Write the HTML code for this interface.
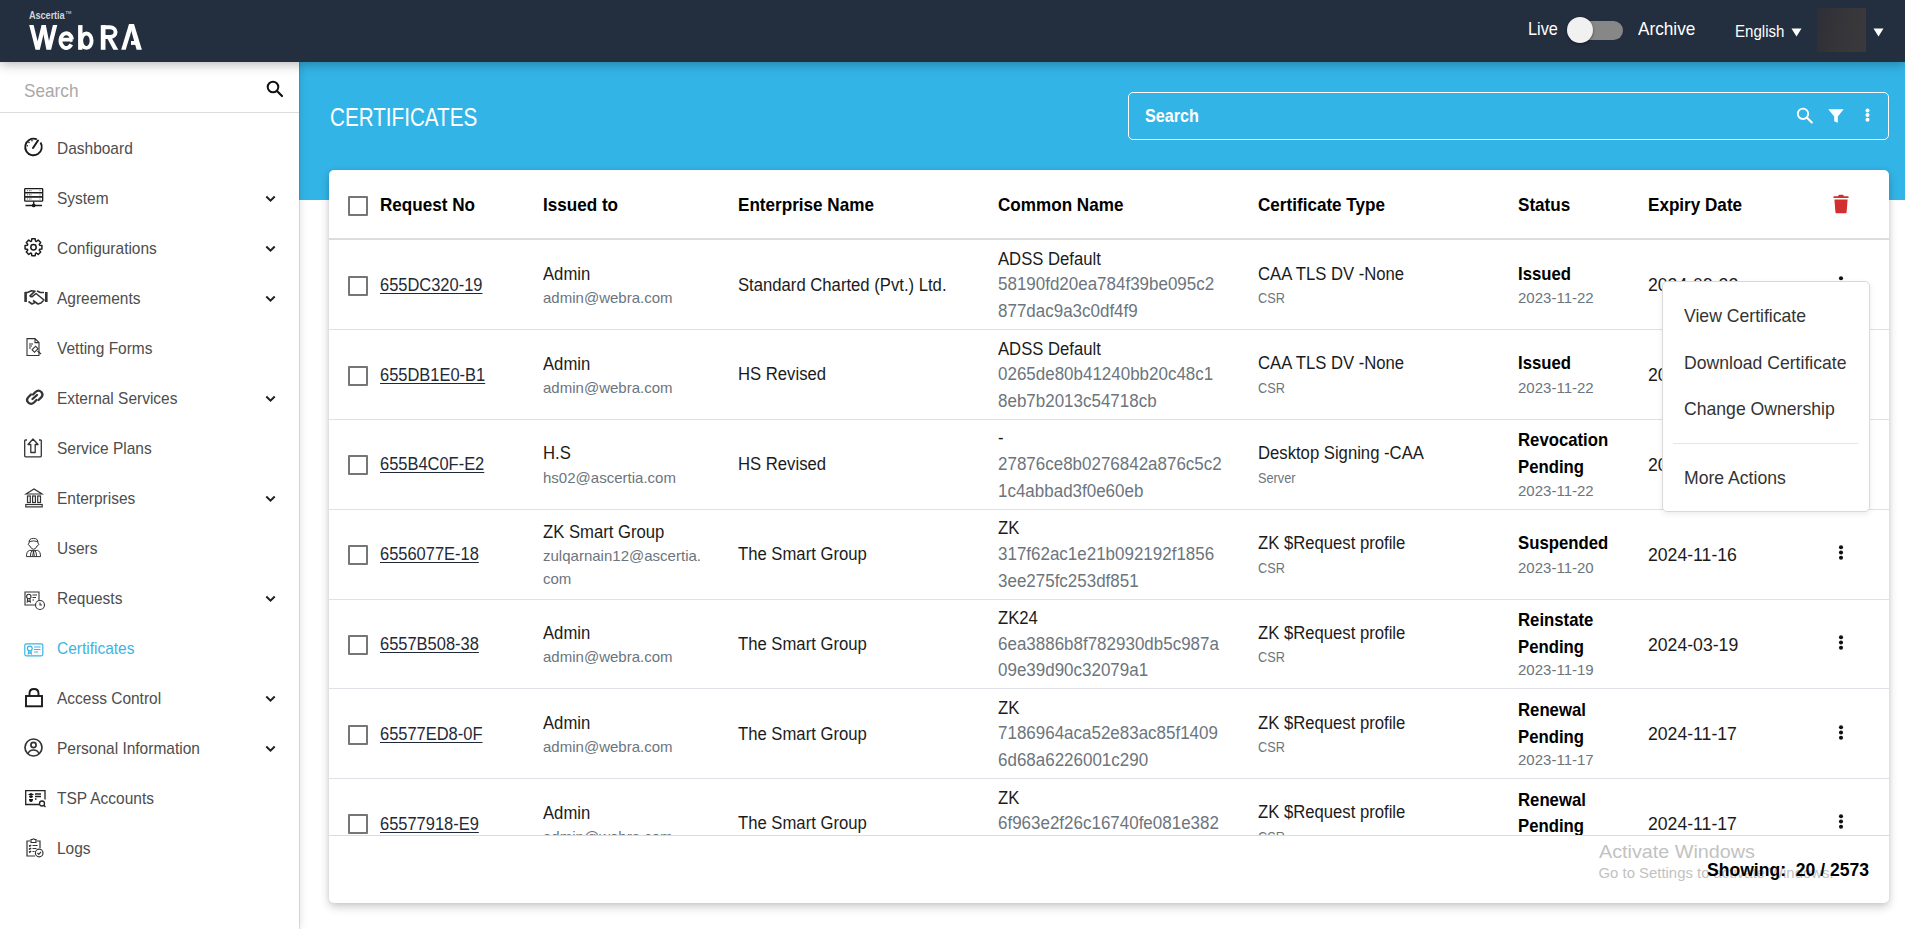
<!DOCTYPE html>
<html><head><meta charset="utf-8">
<style>
*{box-sizing:border-box;margin:0;padding:0}
html,body{width:1905px;height:929px;overflow:hidden;background:#fff;font-family:"Liberation Sans",sans-serif;color:#212529}
.abs{position:absolute}
.t{position:absolute;white-space:nowrap;line-height:1;transform-origin:0 0}
#hdr{position:absolute;left:0;top:0;width:1905px;height:62px;background:#232e3e;z-index:5;box-shadow:0 2px 11px rgba(0,0,0,.3)}
#side{position:absolute;left:0;top:62px;width:299px;height:867px;background:#fff;z-index:3;box-shadow:1px 0 0 rgba(0,0,0,.1),1px 0 8px rgba(0,0,0,.13)}
#banner{position:absolute;left:299px;top:62px;width:1606px;height:138px;background:#33b4e6}
#card{position:absolute;left:329px;top:170px;width:1560px;height:733px;background:#fff;border-radius:5px;box-shadow:0 4px 10px rgba(0,0,0,.2),0 0 4px rgba(0,0,0,.08);z-index:1}
svg{position:absolute;overflow:visible}
</style></head><body>
<div id="hdr">
<div class="t" style="left:29px;top:11.00px;font-size:10px;color:#d2d5d9;font-weight:bold;transform:scaleX(0.92);letter-spacing:-0.1px">Ascertia</div>
<div class="t" style="left:65.6px;top:10.6px;font-size:4px;color:#b8bcc2;font-weight:bold">TM</div>
<svg style="left:0;top:0" width="160" height="62" viewBox="0 0 160 62"><g fill="#fff"><polygon points="29.2,25.1 33.6,25.1 37.6,41.3 41.6,25.1 45.8,25.1 39.8,49.8 35.5,49.8"/><polygon points="41.6,25.1 45.8,25.1 49,41 52.9,25.1 57.3,25.1 51.1,49.8 46.4,49.8"/><polygon points="129,24.1 133.6,24.1 125.7,49.8 121.2,49.8"/><polygon points="129.4,24.1 134,24.1 141.9,49.8 136.6,49.8"/><rect x="131" y="41" width="7" height="3.9"/><rect x="78.1" y="25.1" width="4.4" height="24.7"/><rect x="100.8" y="25.1" width="4.7" height="24.7"/></g><g fill="none" stroke="#fff" stroke-width="3.9"><path d="M60.5 39.6 H72 L71.94 39.63 L71.78 38.62 L71.50 37.65 L71.12 36.74 L70.64 35.91 L70.08 35.17 L69.44 34.54 L68.74 34.02 L67.99 33.64 L67.20 33.40 L66.40 33.30 L65.59 33.35 L64.80 33.54 L64.04 33.87 L63.31 34.33 L62.65 34.92 L62.06 35.62 L61.55 36.42 L61.13 37.30 L60.81 38.25 L60.61 39.25 L60.51 40.27 L60.52 41.30 L60.65 42.32 L60.89 43.31 L61.23 44.24 L61.68 45.10 L62.21 45.88 L62.82 46.55 L63.50 47.11 L64.24 47.53 L65.01 47.83 L65.81 47.98 L66.62 47.99 L67.42 47.85 L68.19 47.57 L68.93 47.15 L69.62 46.61 L70.24 45.95 L70.78 45.18 L71.23 44.33"/><ellipse cx="86.4" cy="40.7" rx="5.2" ry="7.2"/><path d="M103 27.25 H110 A5.6 4.85 0 0 1 110 36.95 H103"/></g><polygon points="106.5,37 111.2,37 118.3,49.8 113.4,49.8" fill="#fff"/></svg>
<div class="t" style="left:1527.5px;top:19.97px;font-size:18.5px;color:#fff;transform:scaleX(0.88);">Live</div>
<div class="abs" style="left:1568px;top:21px;width:55px;height:19px;border-radius:10px;background:#878787"></div>
<div class="abs" style="left:1567px;top:17px;width:26px;height:26px;border-radius:50%;background:#f1f1f1;box-shadow:0 1px 3px rgba(0,0,0,.45)"></div>
<div class="t" style="left:1638px;top:19.89px;font-size:18.6px;color:#fff;transform:scaleX(0.925);">Archive</div>
<div class="t" style="left:1734.5px;top:22.86px;font-size:16.4px;color:#fff;transform:scaleX(0.92);">English</div>
<svg style="left:1791px;top:28px" width="11" height="9"><path d="M0.5 0.5 L10.5 0.5 L5.5 8.5 Z" fill="#fff"/></svg>
<div class="abs" style="left:1817px;top:8px;width:49px;height:44px;background:linear-gradient(100deg,#2e3038 0%,#363539 50%,#3b393b 100%)"></div>
<svg style="left:1873px;top:28px" width="11" height="9"><path d="M0.5 0.5 L10.5 0.5 L5.5 8.5 Z" fill="#fff"/></svg>
</div>
<div id="side">
</div>
<div style="position:absolute;left:0;top:0;z-index:4">
<div class="t" style="left:24px;top:81.89px;font-size:18.6px;color:#a9a9a9;transform:scaleX(0.925);">Search</div>
<svg style="left:266px;top:80px" width="18" height="18" viewBox="0 0 18 18"><circle cx="7" cy="7" r="5.3" fill="none" stroke="#111" stroke-width="2"/><path d="M11 11 L16 16" stroke="#111" stroke-width="2.2" stroke-linecap="round"/></svg>
<div class="abs" style="left:0;top:112px;width:299px;height:1px;background:#dcdcdc"></div>
<svg style="left:24px;top:138px" width="19" height="19" viewBox="0 0 19 19"><circle cx="9.5" cy="9" r="8.3" fill="none" stroke="#1a1a1a" stroke-width="1.9" stroke-dasharray="46.9 5.25" transform="rotate(-32 9.5 9)"/><path d="M9 10 L14 2.5" stroke="#1a1a1a" stroke-width="2" stroke-linecap="round"/><circle cx="5" cy="4.5" r=".8" fill="#1a1a1a"/><circle cx="3.3" cy="7.7" r=".8" fill="#1a1a1a"/><circle cx="8" cy="2.8" r=".8" fill="#1a1a1a"/></svg>
<div class="t" style="left:57px;top:140.99px;font-size:16.6px;color:#4d4d4d;transform:scaleX(0.933);">Dashboard</div>
<svg style="left:24px;top:188px" width="19" height="19" viewBox="0 0 19 19"><g fill="none" stroke="#1a1a1a" stroke-width="1.3"><rect x=".7" y=".7" width="18" height="4" rx=".6"/><rect x=".7" y="4.7" width="18" height="4.2" rx=".6"/><rect x=".7" y="8.9" width="18" height="4.3" rx=".6"/><path d="M1.5 17.5 H18 M9.7 13.2 V16.3"/><circle cx="9.7" cy="17.4" r="1.2"/></g><g stroke="#1a1a1a" stroke-width=".7"><path d="M3 2.7 h1 M5 2.7 h1 M6.5 2.7 h1 M3 6.8 h1 M5 6.8 h1 M6.5 6.8 h1 M3 11 h1 M5 11 h1 M6.5 11 h1 M16 2.2 v1 M16 6.3 v1 M16 10.5 v1"/></g></svg>
<div class="t" style="left:57px;top:190.99px;font-size:16.6px;color:#4d4d4d;transform:scaleX(0.933);">System</div>
<svg style="left:265px;top:195px" width="11" height="8" viewBox="0 0 11 8"><path d="M1.3 1.5 L5.5 5.7 L9.7 1.5" fill="none" stroke="#222" stroke-width="2"/></svg>
<svg style="left:24px;top:238px" width="19" height="19" viewBox="0 0 19 19"><path fill="none" stroke="#1a1a1a" stroke-width="1.45" stroke-linejoin="round" d="M7.49 3.17 L7.79 0.82 L11.21 0.82 L11.51 3.17 L12.37 3.53 L14.25 2.08 L16.67 4.50 L15.22 6.38 L15.58 7.24 L17.93 7.54 L17.93 10.96 L15.58 11.26 L15.22 12.12 L16.67 14.00 L14.25 16.42 L12.37 14.97 L11.51 15.33 L11.21 17.68 L7.79 17.68 L7.49 15.33 L6.63 14.97 L4.75 16.42 L2.33 14.00 L3.78 12.12 L3.42 11.26 L1.07 10.96 L1.07 7.54 L3.42 7.24 L3.78 6.38 L2.33 4.50 L4.75 2.08 L6.63 3.53Z"/><circle cx="9.5" cy="9.25" r="2.7" fill="none" stroke="#1a1a1a" stroke-width="1.5"/></svg>
<div class="t" style="left:57px;top:240.99px;font-size:16.6px;color:#4d4d4d;transform:scaleX(0.933);">Configurations</div>
<svg style="left:265px;top:245px" width="11" height="8" viewBox="0 0 11 8"><path d="M1.3 1.5 L5.5 5.7 L9.7 1.5" fill="none" stroke="#222" stroke-width="2"/></svg>
<svg style="left:24px;top:290px" width="24" height="15" viewBox="0 0 24 15"><g fill="none" stroke="#333" stroke-width="1.6" stroke-linejoin="round"><path d="M1 2.5 L3.5 2.5 L7.5 0.8 L11 1.2 L6 5.8 Q7 7.5 9 6 L12 3.5 L20 10 L17 13 L14 14 L9 10.5"/><path d="M4.5 11.5 L8 14 L11 12.5"/><path d="M20 2.5 L16.5 2.5 L13 1"/></g><rect x=".3" y="2" width="2.6" height="10" fill="#333"/><rect x="21" y="2" width="2.6" height="10" fill="#333"/></svg>
<div class="t" style="left:57px;top:290.99px;font-size:16.6px;color:#4d4d4d;transform:scaleX(0.933);">Agreements</div>
<svg style="left:265px;top:295px" width="11" height="8" viewBox="0 0 11 8"><path d="M1.3 1.5 L5.5 5.7 L9.7 1.5" fill="none" stroke="#222" stroke-width="2"/></svg>
<svg style="left:25px;top:338px" width="17" height="19" viewBox="0 0 17 19"><g fill="none" stroke="#333" stroke-width="1.1"><path d="M2 .6 H10 L14 4.6 V17.5 H2 Z M10 .6 V4.6 H14"/><path d="M4 6 H8 M4 8 H7 M4 10 H6"/><rect x="7.5" y="9.5" width="5" height="3.5" transform="rotate(-45 10 11.2)"/><path d="M12.5 13 L16 16"/></g></svg>
<div class="t" style="left:57px;top:340.99px;font-size:16.6px;color:#4d4d4d;transform:scaleX(0.933);">Vetting Forms</div>
<svg style="left:25px;top:389px" width="20" height="17" viewBox="0 0 20 17"><g fill="none" stroke="#333" stroke-width="2.3" stroke-linecap="round"><path d="M8 5.5 L10.5 3 Q13.5 0.3 16.3 3 Q18.8 5.8 16 8.6 L13.5 11"/><path d="M11.5 11 L9 13.5 Q6 16.3 3.2 13.5 Q0.7 10.7 3.5 8 L6 5.5"/><path d="M7.5 10 L12 6"/></g></svg>
<div class="t" style="left:57px;top:390.99px;font-size:16.6px;color:#4d4d4d;transform:scaleX(0.933);">External Services</div>
<svg style="left:265px;top:395px" width="11" height="8" viewBox="0 0 11 8"><path d="M1.3 1.5 L5.5 5.7 L9.7 1.5" fill="none" stroke="#222" stroke-width="2"/></svg>
<svg style="left:24px;top:438px" width="18" height="20" viewBox="0 0 18 20"><g fill="none" stroke="#333" stroke-width="1.3"><path d="M3 2 H1.5 Q.7 2 .7 2.8 V18 Q.7 18.8 1.5 18.8 H16.5 Q17.3 18.8 17.3 18 V2.8 Q17.3 2 16.5 2 H15"/><path d="M9 1 L4 6.5 H6.8 V14.5 H11.2 V6.5 H14 Z" stroke-linejoin="round"/></g></svg>
<div class="t" style="left:57px;top:440.99px;font-size:16.6px;color:#4d4d4d;transform:scaleX(0.933);">Service Plans</div>
<svg style="left:25px;top:488px" width="18" height="20" viewBox="0 0 18 20"><g fill="none" stroke="#333" stroke-width="1.2"><path d="M1 6 L9 1 L17 6 Z M1 6 H17"/><rect x="2.5" y="8" width="2.8" height="6.5"/><rect x="7.6" y="8" width="2.8" height="6.5"/><rect x="12.7" y="8" width="2.8" height="6.5"/><rect x=".8" y="16.5" width="16.4" height="2.4"/></g></svg>
<div class="t" style="left:57px;top:490.99px;font-size:16.6px;color:#4d4d4d;transform:scaleX(0.933);">Enterprises</div>
<svg style="left:265px;top:495px" width="11" height="8" viewBox="0 0 11 8"><path d="M1.3 1.5 L5.5 5.7 L9.7 1.5" fill="none" stroke="#222" stroke-width="2"/></svg>
<svg style="left:26px;top:538px" width="15" height="19.5" viewBox="0 0 15 19.5"><g fill="none" stroke="#333" stroke-width="1.0" stroke-linejoin="round"><path d="M3.1 5 Q2.6 0.4 7.5 0.4 Q12.4 0.4 11.9 5"/><path d="M3.2 3.6 Q7.5 2.2 11.8 3.6"/><path d="M3.1 5 L2.2 6.3 Q2.6 7.6 3.9 7.9 Q5 10.9 7.5 11.3 Q10 10.9 11.1 7.9 Q12.4 7.6 12.8 6.3 L11.9 5"/><path d="M0.5 18.6 Q0.4 13.2 3.6 12.4 H11.4 Q14.6 13.2 14.5 18.6 Z"/><path d="M4.4 18.6 Q4.5 14.2 6 12.6 M10.6 18.6 Q10.5 14.2 9 12.6 M7.5 13.8 L6.6 18.4 M7.5 13.8 L8.4 18.4"/></g><circle cx="7.5" cy="13.4" r="1" fill="#333"/></svg>
<div class="t" style="left:57px;top:540.99px;font-size:16.6px;color:#4d4d4d;transform:scaleX(0.933);">Users</div>
<svg style="left:24px;top:591px" width="21" height="19" viewBox="0 0 21 19"><g fill="none" stroke="#333" stroke-width="1.1"><path d="M15 10 V1 H1 V14 H11"/><circle cx="4.8" cy="5.5" r="2.2"/><path d="M3.7 7.5 L3.3 11 L4.8 10 L6.3 11 L5.9 7.5"/><path d="M8.5 4 H13 M8.5 6.5 H12 M8.5 9 H10"/><circle cx="16" cy="14" r="4.5" fill="#fff"/><path d="M16 11.5 V14 H18"/></g></svg>
<div class="t" style="left:57px;top:590.99px;font-size:16.6px;color:#4d4d4d;transform:scaleX(0.933);">Requests</div>
<svg style="left:265px;top:595px" width="11" height="8" viewBox="0 0 11 8"><path d="M1.3 1.5 L5.5 5.7 L9.7 1.5" fill="none" stroke="#222" stroke-width="2"/></svg>
<svg style="left:24px;top:643px" width="20" height="14" viewBox="0 0 20 14"><g fill="none" stroke="#3cb4e3" stroke-width="1.2"><rect x=".8" y=".8" width="18" height="12" rx="1.5"/><circle cx="5.8" cy="5.5" r="2.4"/><path d="M4.8 7.7 L4.3 10.8 L5.8 9.8 L7.3 10.8 L6.8 7.7"/><path d="M10 4 H16.5 M10 6.5 H16.5 M10 9 H14"/></g></svg>
<div class="t" style="left:57px;top:640.99px;font-size:16.6px;color:#3cb4e3;transform:scaleX(0.933);">Certificates</div>
<svg style="left:25px;top:688px" width="18" height="19.5" viewBox="0 0 18 19.5"><g fill="none" stroke="#1a1a1a" stroke-width="1.9"><path d="M4.5 8 V5.5 Q4.5 1 9 1 Q13.5 1 13.5 5.5 V8"/><rect x="1" y="8" width="16" height="10.3"/></g></svg>
<div class="t" style="left:57px;top:690.99px;font-size:16.6px;color:#4d4d4d;transform:scaleX(0.933);">Access Control</div>
<svg style="left:265px;top:695px" width="11" height="8" viewBox="0 0 11 8"><path d="M1.3 1.5 L5.5 5.7 L9.7 1.5" fill="none" stroke="#222" stroke-width="2"/></svg>
<svg style="left:24px;top:738px" width="19" height="19" viewBox="0 0 19 19"><g fill="none" stroke="#333" stroke-width="1.7"><circle cx="9.5" cy="9.5" r="8.5"/><circle cx="9.5" cy="7" r="2.6"/><path d="M3.8 15.8 Q5.5 12 9.5 12 Q13.5 12 15.2 15.8"/></g></svg>
<div class="t" style="left:57px;top:740.99px;font-size:16.6px;color:#4d4d4d;transform:scaleX(0.933);">Personal Information</div>
<svg style="left:265px;top:745px" width="11" height="8" viewBox="0 0 11 8"><path d="M1.3 1.5 L5.5 5.7 L9.7 1.5" fill="none" stroke="#222" stroke-width="2"/></svg>
<svg style="left:25px;top:790px" width="21" height="18" viewBox="0 0 21 18"><g fill="none" stroke="#222" stroke-width="1.3"><path d="M14 14.5 H.7 V.7 H20 V9.5"/><path d="M10 4 H16 M10 6.5 H16 M10 9 H11.5"/><circle cx="17" cy="13.5" r="2.5"/><path d="M18.8 15.3 L20.5 17"/></g><path d="M3 4.5 L6 3 L9 4.5 L6 6 Z M4 6 Q4 8 6 8 Q8 8 8 6 M4 9 Q4 12 6 12 Q8 12 8 9 Z" fill="#111"/></svg>
<div class="t" style="left:57px;top:790.99px;font-size:16.6px;color:#4d4d4d;transform:scaleX(0.933);">TSP Accounts</div>
<svg style="left:25px;top:838px" width="19" height="20" viewBox="0 0 19 20"><g fill="none" stroke="#333" stroke-width="1.2"><path d="M5 3 H2 V18 H10"/><path d="M12 3 H15 V10"/><path d="M6 3 V1.5 H7.5 Q8.5 0 9.5 1.5 H11 V3 V4.5 H6 Z"/><path d="M4 7.5 l.8.8 1.4-1.4 M4 10.5 l.8.8 1.4-1.4 M4 13.5 l.8.8 1.4-1.4 M7.5 7.5 H12.5 M7.5 10.5 H11.5 M7.5 13.5 H9.5"/><circle cx="14.2" cy="15" r="3.8" fill="#fff"/><path d="M12.5 15 L13.8 16.3 L16 13.8"/></g></svg>
<div class="t" style="left:57px;top:840.99px;font-size:16.6px;color:#4d4d4d;transform:scaleX(0.933);">Logs</div>
</div>
<div id="banner"></div>
<div style="position:absolute;left:0;top:0;z-index:2">
<div class="t" style="left:330px;top:105.03px;font-size:25.5px;color:#fff;transform:scaleX(0.81);">CERTIFICATES</div>
<div class="abs" style="left:1128px;top:92px;width:761px;height:48px;border:1.2px solid #fff;border-radius:5px"></div>
<div class="t" style="left:1144.5px;top:106.69px;font-size:18.6px;color:#fff;font-weight:bold;transform:scaleX(0.87);">Search</div>
<svg style="left:1796px;top:107px" width="18" height="17" viewBox="0 0 18 17"><circle cx="7" cy="6.8" r="5.2" fill="none" stroke="#fff" stroke-width="1.9"/><path d="M10.8 10.5 L15.8 15.5" stroke="#fff" stroke-width="2.1" stroke-linecap="round"/></svg>
<svg style="left:1828px;top:109px" width="16" height="14" viewBox="0 0 16 14"><path d="M0.3 0.3 H15.7 L9.8 7.5 V13.7 L6.2 12.3 V7.5 Z" fill="#fff"/></svg>
<svg style="left:1864px;top:108px" width="7" height="15" viewBox="0 0 7 15"><circle cx="3.5" cy="2.5" r="2" fill="#fff"/><circle cx="3.5" cy="7.1" r="2" fill="#fff"/><circle cx="3.5" cy="11.7" r="2" fill="#fff"/></svg>
</div>
<div id="card"></div>
<div style="position:absolute;left:0;top:0;z-index:2">
<div class="t" style="left:1598.5px;top:841.88px;font-size:19.2px;color:#c2c2c2;transform:scaleX(1.03);">Activate Windows</div>
<div class="t" style="left:1598.5px;top:866.04px;font-size:14.9px;color:#c2c2c2;">Go to Settings to activate Windows.</div>
</div>
<div style="position:absolute;left:0;top:0;z-index:2">
<div class="abs" style="left:348px;top:196px;width:19.5px;height:19.5px;border:2px solid #767676;border-radius:1px"></div>
<div class="t" style="left:380px;top:195.91px;font-size:18.1px;color:#000;font-weight:bold;transform:scaleX(0.945);">Request No</div>
<div class="t" style="left:543px;top:195.91px;font-size:18.1px;color:#000;font-weight:bold;transform:scaleX(0.945);">Issued to</div>
<div class="t" style="left:738px;top:195.91px;font-size:18.1px;color:#000;font-weight:bold;transform:scaleX(0.945);">Enterprise Name</div>
<div class="t" style="left:998px;top:195.91px;font-size:18.1px;color:#000;font-weight:bold;transform:scaleX(0.945);">Common Name</div>
<div class="t" style="left:1257.8px;top:195.91px;font-size:18.1px;color:#000;font-weight:bold;transform:scaleX(0.945);">Certificate Type</div>
<div class="t" style="left:1517.8px;top:195.91px;font-size:18.1px;color:#000;font-weight:bold;transform:scaleX(0.945);">Status</div>
<div class="t" style="left:1647.8px;top:195.91px;font-size:18.1px;color:#000;font-weight:bold;transform:scaleX(0.945);">Expiry Date</div>
<svg style="left:1833px;top:194px" width="16" height="20" viewBox="0 0 16 20"><path d="M5.2 2.2 Q5.2 0.8 6.6 0.8 H9.4 Q10.8 0.8 10.8 2.2 H14.8 Q15.6 2.2 15.6 3 V4.1 H0.4 V3 Q0.4 2.2 1.2 2.2 Z" fill="#d42f2f"/><path d="M1.4 5.4 H14.6 L13.6 18.2 Q13.5 19.2 12.5 19.2 H3.5 Q2.5 19.2 2.4 18.2 Z" fill="#d42f2f"/></svg>
<div class="abs" style="left:329px;top:238px;width:1560px;height:2px;background:#dcdcdc"></div>
<div style="position:absolute;left:329px;top:240px;width:1560px;height:595px;overflow:hidden"><div style="position:absolute;left:-329px;top:-240px">
<div class="abs" style="left:348px;top:276px;width:19.5px;height:19.5px;border:2px solid #767676;border-radius:1px"></div>
<div class="t" style="left:379.5px;top:275.84px;font-size:18.3px;color:#1f2a38;transform:scaleX(0.9);text-decoration:underline;text-underline-offset:2px;text-decoration-thickness:1px">655DC320-19</div>
<div class="t" style="left:543px;top:264.84px;font-size:18.3px;color:#1b1b1b;transform:scaleX(0.912);">Admin</div>
<div class="t" style="left:543px;top:291.02px;font-size:14.8px;color:#6c757d;transform:scaleX(1.015);">admin@webra.com</div>
<div class="t" style="left:738px;top:275.64px;font-size:18.3px;color:#1b1b1b;transform:scaleX(0.912);">Standard Charted (Pvt.) Ltd.</div>
<div class="t" style="left:998px;top:249.84px;font-size:18.3px;color:#1b1b1b;transform:scaleX(0.912);">ADSS Default</div>
<div class="t" style="left:998px;top:276.32px;font-size:17.5px;color:#6c757d;transform:scaleX(0.97);">58190fd20ea784f39be095c2</div>
<div class="t" style="left:998px;top:303.12px;font-size:17.5px;color:#6c757d;transform:scaleX(0.97);">877dac9a3c0df4f9</div>
<div class="t" style="left:1257.8px;top:264.54px;font-size:18.3px;color:#1b1b1b;transform:scaleX(0.912);">CAA TLS DV -None</div>
<div class="t" style="left:1257.8px;top:291.12px;font-size:14.8px;color:#6c757d;transform:scaleX(0.86);">CSR</div>
<div class="t" style="left:1517.8px;top:264.62px;font-size:18.1px;color:#000;font-weight:bold;transform:scaleX(0.925);">Issued</div>
<div class="t" style="left:1517.8px;top:291.32px;font-size:14.8px;color:#6c757d;transform:scaleX(1.015);">2023-11-22</div>
<div class="t" style="left:1647.8px;top:276.30px;font-size:18.0px;color:#1b1b1b;transform:scaleX(0.98);">2024-09-22</div>
<svg style="left:1838px;top:275.6px" width="6" height="15" viewBox="0 0 6 15"><circle cx="3" cy="2.2" r="2.05" fill="#111"/><circle cx="3" cy="7.45" r="2.05" fill="#111"/><circle cx="3" cy="12.7" r="2.05" fill="#111"/></svg>
<div class="abs" style="left:329px;top:329px;width:1560px;height:1px;background:#dee2e6"></div>
<div class="abs" style="left:348px;top:366px;width:19.5px;height:19.5px;border:2px solid #767676;border-radius:1px"></div>
<div class="t" style="left:379.5px;top:365.64px;font-size:18.3px;color:#1f2a38;transform:scaleX(0.9);text-decoration:underline;text-underline-offset:2px;text-decoration-thickness:1px">655DB1E0-B1</div>
<div class="t" style="left:543px;top:354.64px;font-size:18.3px;color:#1b1b1b;transform:scaleX(0.912);">Admin</div>
<div class="t" style="left:543px;top:380.82px;font-size:14.8px;color:#6c757d;transform:scaleX(1.015);">admin@webra.com</div>
<div class="t" style="left:738px;top:365.44px;font-size:18.3px;color:#1b1b1b;transform:scaleX(0.912);">HS Revised</div>
<div class="t" style="left:998px;top:339.64px;font-size:18.3px;color:#1b1b1b;transform:scaleX(0.912);">ADSS Default</div>
<div class="t" style="left:998px;top:366.12px;font-size:17.5px;color:#6c757d;transform:scaleX(0.97);">0265de80b41240bb20c48c1</div>
<div class="t" style="left:998px;top:392.93px;font-size:17.5px;color:#6c757d;transform:scaleX(0.97);">8eb7b2013c54718cb</div>
<div class="t" style="left:1257.8px;top:354.34px;font-size:18.3px;color:#1b1b1b;transform:scaleX(0.912);">CAA TLS DV -None</div>
<div class="t" style="left:1257.8px;top:380.92px;font-size:14.8px;color:#6c757d;transform:scaleX(0.86);">CSR</div>
<div class="t" style="left:1517.8px;top:354.41px;font-size:18.1px;color:#000;font-weight:bold;transform:scaleX(0.925);">Issued</div>
<div class="t" style="left:1517.8px;top:381.12px;font-size:14.8px;color:#6c757d;transform:scaleX(1.015);">2023-11-22</div>
<div class="t" style="left:1647.8px;top:366.10px;font-size:18.0px;color:#1b1b1b;transform:scaleX(0.98);">2024-09-22</div>
<svg style="left:1838px;top:365.4px" width="6" height="15" viewBox="0 0 6 15"><circle cx="3" cy="2.2" r="2.05" fill="#111"/><circle cx="3" cy="7.45" r="2.05" fill="#111"/><circle cx="3" cy="12.7" r="2.05" fill="#111"/></svg>
<div class="abs" style="left:329px;top:419px;width:1560px;height:1px;background:#dee2e6"></div>
<div class="abs" style="left:348px;top:455px;width:19.5px;height:19.5px;border:2px solid #767676;border-radius:1px"></div>
<div class="t" style="left:379.5px;top:455.44px;font-size:18.3px;color:#1f2a38;transform:scaleX(0.9);text-decoration:underline;text-underline-offset:2px;text-decoration-thickness:1px">655B4C0F-E2</div>
<div class="t" style="left:543px;top:444.44px;font-size:18.3px;color:#1b1b1b;transform:scaleX(0.912);">H.S</div>
<div class="t" style="left:543px;top:470.62px;font-size:14.8px;color:#6c757d;transform:scaleX(1.015);">hs02@ascertia.com</div>
<div class="t" style="left:738px;top:455.25px;font-size:18.3px;color:#1b1b1b;transform:scaleX(0.912);">HS Revised</div>
<div class="t" style="left:998px;top:429.44px;font-size:18.3px;color:#1b1b1b;transform:scaleX(0.912);">-</div>
<div class="t" style="left:998px;top:455.93px;font-size:17.5px;color:#6c757d;transform:scaleX(0.97);">27876ce8b0276842a876c5c2</div>
<div class="t" style="left:998px;top:482.72px;font-size:17.5px;color:#6c757d;transform:scaleX(0.97);">1c4abbad3f0e60eb</div>
<div class="t" style="left:1257.8px;top:444.14px;font-size:18.3px;color:#1b1b1b;transform:scaleX(0.912);">Desktop Signing -CAA</div>
<div class="t" style="left:1257.8px;top:470.72px;font-size:14.8px;color:#6c757d;transform:scaleX(0.86);">Server</div>
<div class="t" style="left:1517.8px;top:431.31px;font-size:18.1px;color:#000;font-weight:bold;transform:scaleX(0.925);">Revocation</div>
<div class="t" style="left:1517.8px;top:458.12px;font-size:18.1px;color:#000;font-weight:bold;transform:scaleX(0.925);">Pending</div>
<div class="t" style="left:1517.8px;top:483.72px;font-size:14.8px;color:#6c757d;transform:scaleX(1.015);">2023-11-22</div>
<div class="t" style="left:1647.8px;top:455.90px;font-size:18.0px;color:#1b1b1b;transform:scaleX(0.98);">2024-09-22</div>
<svg style="left:1838px;top:455.2px" width="6" height="15" viewBox="0 0 6 15"><circle cx="3" cy="2.2" r="2.05" fill="#111"/><circle cx="3" cy="7.45" r="2.05" fill="#111"/><circle cx="3" cy="12.7" r="2.05" fill="#111"/></svg>
<div class="abs" style="left:329px;top:509px;width:1560px;height:1px;background:#dee2e6"></div>
<div class="abs" style="left:348px;top:545px;width:19.5px;height:19.5px;border:2px solid #767676;border-radius:1px"></div>
<div class="t" style="left:379.5px;top:545.25px;font-size:18.3px;color:#1f2a38;transform:scaleX(0.9);text-decoration:underline;text-underline-offset:2px;text-decoration-thickness:1px">6556077E-18</div>
<div class="t" style="left:543px;top:523.25px;font-size:18.3px;color:#1b1b1b;transform:scaleX(0.912);">ZK Smart Group</div>
<div class="t" style="left:543px;top:548.72px;font-size:14.8px;color:#6c757d;transform:scaleX(1.015);">zulqarnain12@ascertia.</div>
<div class="t" style="left:543px;top:571.72px;font-size:14.8px;color:#6c757d;transform:scaleX(1.015);">com</div>
<div class="t" style="left:738px;top:545.05px;font-size:18.3px;color:#1b1b1b;transform:scaleX(0.912);">The Smart Group</div>
<div class="t" style="left:998px;top:519.25px;font-size:18.3px;color:#1b1b1b;transform:scaleX(0.912);">ZK</div>
<div class="t" style="left:998px;top:545.73px;font-size:17.5px;color:#6c757d;transform:scaleX(0.97);">317f62ac1e21b092192f1856</div>
<div class="t" style="left:998px;top:572.52px;font-size:17.5px;color:#6c757d;transform:scaleX(0.97);">3ee275fc253df851</div>
<div class="t" style="left:1257.8px;top:533.95px;font-size:18.3px;color:#1b1b1b;transform:scaleX(0.912);">ZK $Request profile</div>
<div class="t" style="left:1257.8px;top:560.52px;font-size:14.8px;color:#6c757d;transform:scaleX(0.86);">CSR</div>
<div class="t" style="left:1517.8px;top:534.01px;font-size:18.1px;color:#000;font-weight:bold;transform:scaleX(0.925);">Suspended</div>
<div class="t" style="left:1517.8px;top:560.72px;font-size:14.8px;color:#6c757d;transform:scaleX(1.015);">2023-11-20</div>
<div class="t" style="left:1647.8px;top:545.70px;font-size:18.0px;color:#1b1b1b;transform:scaleX(0.98);">2024-11-16</div>
<svg style="left:1838px;top:545.0px" width="6" height="15" viewBox="0 0 6 15"><circle cx="3" cy="2.2" r="2.05" fill="#111"/><circle cx="3" cy="7.45" r="2.05" fill="#111"/><circle cx="3" cy="12.7" r="2.05" fill="#111"/></svg>
<div class="abs" style="left:329px;top:599px;width:1560px;height:1px;background:#dee2e6"></div>
<div class="abs" style="left:348px;top:635px;width:19.5px;height:19.5px;border:2px solid #767676;border-radius:1px"></div>
<div class="t" style="left:379.5px;top:635.05px;font-size:18.3px;color:#1f2a38;transform:scaleX(0.9);text-decoration:underline;text-underline-offset:2px;text-decoration-thickness:1px">6557B508-38</div>
<div class="t" style="left:543px;top:624.05px;font-size:18.3px;color:#1b1b1b;transform:scaleX(0.912);">Admin</div>
<div class="t" style="left:543px;top:650.22px;font-size:14.8px;color:#6c757d;transform:scaleX(1.015);">admin@webra.com</div>
<div class="t" style="left:738px;top:634.85px;font-size:18.3px;color:#1b1b1b;transform:scaleX(0.912);">The Smart Group</div>
<div class="t" style="left:998px;top:609.05px;font-size:18.3px;color:#1b1b1b;transform:scaleX(0.912);">ZK24</div>
<div class="t" style="left:998px;top:635.53px;font-size:17.5px;color:#6c757d;transform:scaleX(0.97);">6ea3886b8f782930db5c987a</div>
<div class="t" style="left:998px;top:662.33px;font-size:17.5px;color:#6c757d;transform:scaleX(0.97);">09e39d90c32079a1</div>
<div class="t" style="left:1257.8px;top:623.75px;font-size:18.3px;color:#1b1b1b;transform:scaleX(0.912);">ZK $Request profile</div>
<div class="t" style="left:1257.8px;top:650.32px;font-size:14.8px;color:#6c757d;transform:scaleX(0.86);">CSR</div>
<div class="t" style="left:1517.8px;top:610.92px;font-size:18.1px;color:#000;font-weight:bold;transform:scaleX(0.925);">Reinstate</div>
<div class="t" style="left:1517.8px;top:637.72px;font-size:18.1px;color:#000;font-weight:bold;transform:scaleX(0.925);">Pending</div>
<div class="t" style="left:1517.8px;top:663.32px;font-size:14.8px;color:#6c757d;transform:scaleX(1.015);">2023-11-19</div>
<div class="t" style="left:1647.8px;top:635.50px;font-size:18.0px;color:#1b1b1b;transform:scaleX(0.98);">2024-03-19</div>
<svg style="left:1838px;top:634.8px" width="6" height="15" viewBox="0 0 6 15"><circle cx="3" cy="2.2" r="2.05" fill="#111"/><circle cx="3" cy="7.45" r="2.05" fill="#111"/><circle cx="3" cy="12.7" r="2.05" fill="#111"/></svg>
<div class="abs" style="left:329px;top:688px;width:1560px;height:1px;background:#dee2e6"></div>
<div class="abs" style="left:348px;top:725px;width:19.5px;height:19.5px;border:2px solid #767676;border-radius:1px"></div>
<div class="t" style="left:379.5px;top:724.85px;font-size:18.3px;color:#1f2a38;transform:scaleX(0.9);text-decoration:underline;text-underline-offset:2px;text-decoration-thickness:1px">65577ED8-0F</div>
<div class="t" style="left:543px;top:713.85px;font-size:18.3px;color:#1b1b1b;transform:scaleX(0.912);">Admin</div>
<div class="t" style="left:543px;top:740.02px;font-size:14.8px;color:#6c757d;transform:scaleX(1.015);">admin@webra.com</div>
<div class="t" style="left:738px;top:724.65px;font-size:18.3px;color:#1b1b1b;transform:scaleX(0.912);">The Smart Group</div>
<div class="t" style="left:998px;top:698.85px;font-size:18.3px;color:#1b1b1b;transform:scaleX(0.912);">ZK</div>
<div class="t" style="left:998px;top:725.33px;font-size:17.5px;color:#6c757d;transform:scaleX(0.97);">7186964aca52e83ac85f1409</div>
<div class="t" style="left:998px;top:752.12px;font-size:17.5px;color:#6c757d;transform:scaleX(0.97);">6d68a6226001c290</div>
<div class="t" style="left:1257.8px;top:713.55px;font-size:18.3px;color:#1b1b1b;transform:scaleX(0.912);">ZK $Request profile</div>
<div class="t" style="left:1257.8px;top:740.12px;font-size:14.8px;color:#6c757d;transform:scaleX(0.86);">CSR</div>
<div class="t" style="left:1517.8px;top:700.72px;font-size:18.1px;color:#000;font-weight:bold;transform:scaleX(0.925);">Renewal</div>
<div class="t" style="left:1517.8px;top:727.51px;font-size:18.1px;color:#000;font-weight:bold;transform:scaleX(0.925);">Pending</div>
<div class="t" style="left:1517.8px;top:753.12px;font-size:14.8px;color:#6c757d;transform:scaleX(1.015);">2023-11-17</div>
<div class="t" style="left:1647.8px;top:725.30px;font-size:18.0px;color:#1b1b1b;transform:scaleX(0.98);">2024-11-17</div>
<svg style="left:1838px;top:724.6px" width="6" height="15" viewBox="0 0 6 15"><circle cx="3" cy="2.2" r="2.05" fill="#111"/><circle cx="3" cy="7.45" r="2.05" fill="#111"/><circle cx="3" cy="12.7" r="2.05" fill="#111"/></svg>
<div class="abs" style="left:329px;top:778px;width:1560px;height:1px;background:#dee2e6"></div>
<div class="abs" style="left:348px;top:814px;width:19.5px;height:19.5px;border:2px solid #767676;border-radius:1px"></div>
<div class="t" style="left:379.5px;top:814.64px;font-size:18.3px;color:#1f2a38;transform:scaleX(0.9);text-decoration:underline;text-underline-offset:2px;text-decoration-thickness:1px">65577918-E9</div>
<div class="t" style="left:543px;top:803.64px;font-size:18.3px;color:#1b1b1b;transform:scaleX(0.912);">Admin</div>
<div class="t" style="left:543px;top:829.82px;font-size:14.8px;color:#6c757d;transform:scaleX(1.015);">admin@webra.com</div>
<div class="t" style="left:738px;top:814.45px;font-size:18.3px;color:#1b1b1b;transform:scaleX(0.912);">The Smart Group</div>
<div class="t" style="left:998px;top:788.64px;font-size:18.3px;color:#1b1b1b;transform:scaleX(0.912);">ZK</div>
<div class="t" style="left:998px;top:815.12px;font-size:17.5px;color:#6c757d;transform:scaleX(0.97);">6f963e2f26c16740fe081e382</div>
<div class="t" style="left:998px;top:841.92px;font-size:17.5px;color:#6c757d;transform:scaleX(0.97);">00000000</div>
<div class="t" style="left:1257.8px;top:803.35px;font-size:18.3px;color:#1b1b1b;transform:scaleX(0.912);">ZK $Request profile</div>
<div class="t" style="left:1257.8px;top:829.92px;font-size:14.8px;color:#6c757d;transform:scaleX(0.86);">CSR</div>
<div class="t" style="left:1517.8px;top:790.51px;font-size:18.1px;color:#000;font-weight:bold;transform:scaleX(0.925);">Renewal</div>
<div class="t" style="left:1517.8px;top:817.31px;font-size:18.1px;color:#000;font-weight:bold;transform:scaleX(0.925);">Pending</div>
<div class="t" style="left:1517.8px;top:842.92px;font-size:14.8px;color:#6c757d;transform:scaleX(1.015);">2023-11-17</div>
<div class="t" style="left:1647.8px;top:815.10px;font-size:18.0px;color:#1b1b1b;transform:scaleX(0.98);">2024-11-17</div>
<svg style="left:1838px;top:814.4px" width="6" height="15" viewBox="0 0 6 15"><circle cx="3" cy="2.2" r="2.05" fill="#111"/><circle cx="3" cy="7.45" r="2.05" fill="#111"/><circle cx="3" cy="12.7" r="2.05" fill="#111"/></svg>
<div class="abs" style="left:329px;top:868px;width:1560px;height:1px;background:#dee2e6"></div>
</div></div>
<div class="abs" style="left:329px;top:835px;width:1560px;height:1px;background:#dcdcdc"></div>
<div class="t" style="left:1707px;top:860.52px;font-size:18.8px;color:#000;font-weight:bold;transform:scaleX(0.935);">Showing:&nbsp; 20 / 2573</div>
</div>
<div class="abs" style="z-index:6;left:1662px;top:281px;width:208px;height:231px;background:#fff;border:1px solid #d9d9d9;border-radius:5px;box-shadow:0 2px 6px rgba(0,0,0,.08)"></div>
<div style="position:absolute;left:0;top:0;z-index:7">
<div class="t" style="left:1683.5px;top:306.05px;font-size:19.0px;color:#333;transform:scaleX(0.927);">View Certificate</div>
<div class="t" style="left:1683.5px;top:352.55px;font-size:19.0px;color:#333;transform:scaleX(0.927);">Download Certificate</div>
<div class="t" style="left:1683.5px;top:399.35px;font-size:19.0px;color:#333;transform:scaleX(0.927);">Change Ownership</div>
<div class="t" style="left:1683.5px;top:467.95px;font-size:19.0px;color:#333;transform:scaleX(0.927);">More Actions</div>
<div class="abs" style="left:1673px;top:443px;width:185px;height:1px;background:#e6e6e6"></div>
</div>
</body></html>
